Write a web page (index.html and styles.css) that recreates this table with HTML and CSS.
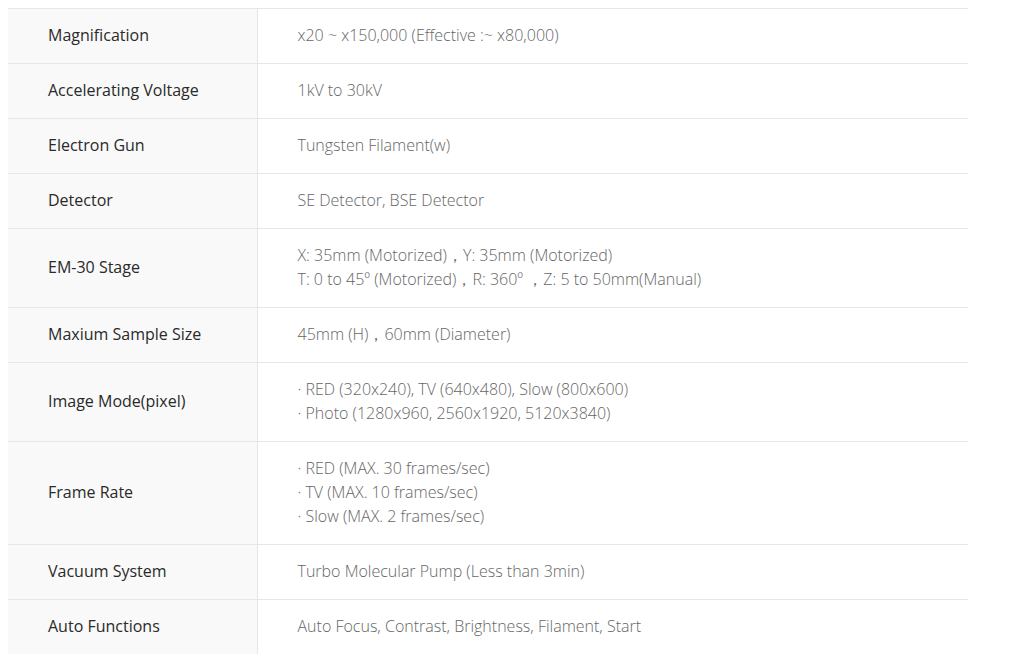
FILE: index.html
```html
<!DOCTYPE html>
<html>
<head>
<meta charset="utf-8">
<link rel="stylesheet" href="styles.css">
</head>
<body>
<table class="spec">
  <tbody>
    <tr><th>Magnification</th><td>x20 ~ x150,000 (Effective :~ x80,000)</td></tr>
    <tr><th>Accelerating Voltage</th><td>1kV to 30kV</td></tr>
    <tr><th>Electron Gun</th><td>Tungsten Filament(w)</td></tr>
    <tr><th>Detector</th><td>SE Detector, BSE Detector</td></tr>
    <tr><th>EM-30 Stage</th><td>X: 35mm (Motorized)，Y: 35mm (Motorized)<br>T: 0 to 45º (Motorized)，R: 360º ，Z: 5 to 50mm(Manual)</td></tr>
    <tr><th>Maxium Sample Size</th><td>45mm (H)，60mm (Diameter)</td></tr>
    <tr><th>Image Mode(pixel)</th><td>· RED (320x240), TV (640x480), Slow (800x600)<br>· Photo (1280x960, 2560x1920, 5120x3840)</td></tr>
    <tr><th>Frame Rate</th><td>· RED (MAX. 30 frames/sec)<br>· TV (MAX. 10 frames/sec)<br>· Slow (MAX. 2 frames/sec)</td></tr>
    <tr><th>Vacuum System</th><td>Turbo Molecular Pump (Less than 3min)</td></tr>
    <tr><th>Auto Functions</th><td>Auto Focus, Contrast, Brightness, Filament, Start</td></tr>
  </tbody>
</table>
</body>
</html>
```

FILE: styles.css
```css
html, body {
  background: #ffffff;
}
body {
  margin: 8px;
  font-family: "Open Sans", "Liberation Sans", sans-serif;
}
.spec {
  width: 960px;
  border-collapse: collapse;
  border-top: 1px solid #e6e6e6;
}
.spec tr {
  border-bottom: 1px solid #e6e6e6;
}
.spec th {
  width: 249px;
  background: #f9f9f9;
  border-right: 1px solid #e6e6e6;
  text-align: left;
  font-weight: 400;
  color: #2a2a2a;
  font-size: 16px;
  line-height: 24px;
  padding: 14px 0 16px 40px;
  box-sizing: border-box;
  vertical-align: middle;
}
.spec td {
  text-align: left;
  font-weight: 300;
  color: #666666;
  font-size: 16px;
  line-height: 24px;
  padding: 14px 40px 16px;
  vertical-align: middle;
}
```
